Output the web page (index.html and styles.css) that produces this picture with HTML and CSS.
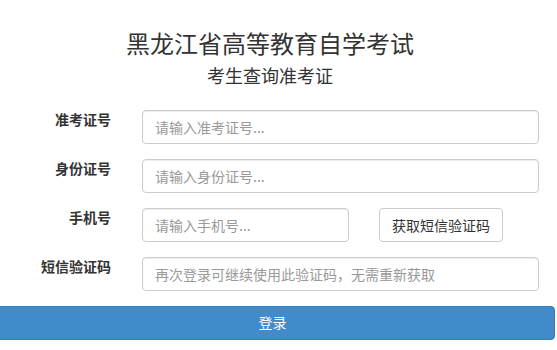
FILE: index.html
```html
<!DOCTYPE html>
<html lang="zh-CN">
<head>
    <meta charset="UTF-8">
    <meta name="viewport" content="width=device-width, initial-scale=1.0">
    <title>黑龙江省高等教育自学考试</title>
    <link rel="stylesheet" href="styles.css">
</head>
<body>
    <div class="header">
        <h1>黑龙江省高等教育自学考试</h1>
        <h2>考生查询准考证</h2>
    </div>

    <form id="queryForm" class="query-form">
        <div class="form-row">
            <label for="zkzh">准考证号</label>
            <input type="text" id="zkzh" class="field" placeholder="请输入准考证号...">
        </div>

        <div class="form-row">
            <label for="sfzh">身份证号</label>
            <input type="text" id="sfzh" class="field" placeholder="请输入身份证号...">
        </div>

        <div class="form-row">
            <label for="sjh">手机号</label>
            <input type="text" id="sjh" class="field field-short" placeholder="请输入手机号...">
            <button type="button" class="btn-code">获取短信验证码</button>
        </div>

        <div class="form-row">
            <label for="yzm">短信验证码</label>
            <input type="text" id="yzm" class="field" placeholder="再次登录可继续使用此验证码，无需重新获取">
        </div>

        <button type="button" class="btn-login">登录</button>
    </form>
</body>
</html>
```

FILE: styles.css
```css
body {
    font-family: "Noto Sans CJK SC", "Liberation Sans", sans-serif;
    font-size: 14px;
    color: #333;
    margin: 0;
    background: #fff;
}

.header {
    width: 540px;
    text-align: center;
    padding-top: 26px;
}

.header h1 {
    font-size: 24px;
    font-weight: normal;
    line-height: 34px;
    margin: 0;
}

.header h2 {
    font-size: 18px;
    font-weight: normal;
    line-height: 24px;
    margin: 3px 0 0;
}

.query-form {
    margin-top: 23px;
}

.form-row {
    display: flex;
    align-items: flex-start;
    margin-bottom: 15px;
}

.form-row label {
    width: 111px;
    text-align: right;
    font-weight: bold;
    line-height: 20px;
    margin-top: -1px;
    margin-right: 31px;
}

.field {
    width: 397px;
    height: 34px;
    padding: 6px 12px;
    box-sizing: border-box;
    border: 1px solid #ccc;
    border-radius: 4px;
    font-family: inherit;
    font-size: 14px;
    color: #555;
    box-shadow: inset 0 1px 1px rgba(0, 0, 0, 0.075);
}

.field::placeholder {
    color: #999;
}

.field-short {
    width: 207px;
}

.btn-code {
    margin-left: 30px;
    width: 124px;
    height: 34px;
    background: #fff;
    border: 1px solid #ccc;
    border-radius: 4px;
    font-family: inherit;
    font-size: 14px;
    color: #333;
    cursor: pointer;
}

.btn-login {
    display: block;
    margin-left: -10px;
    width: 565px;
    height: 34px;
    padding-bottom: 3px;
    background-color: #428bca;
    border: 1px solid #357ebd;
    border-radius: 4px;
    color: #fff;
    font-family: inherit;
    font-size: 14px;
    cursor: pointer;
}

.btn-login:hover {
    background-color: #3276b1;
}
```
